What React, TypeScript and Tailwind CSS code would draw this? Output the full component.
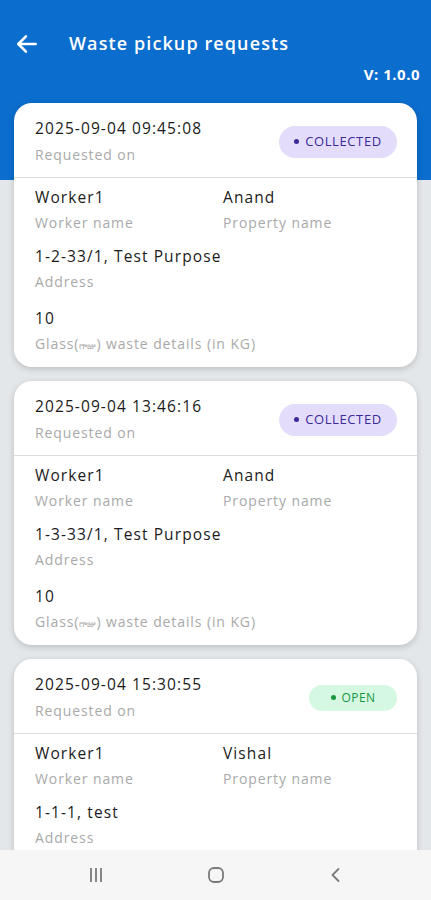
import React from "react";

type Req = {
  date: string;
  status: "COLLECTED" | "OPEN";
  worker: string;
  property: string;
  address: string;
  qty?: string;
};

const data: Req[] = [
  { date: "2025-09-04 09:45:08", status: "COLLECTED", worker: "Worker1", property: "Anand", address: "1-2-33/1, Test Purpose", qty: "10" },
  { date: "2025-09-04 13:46:16", status: "COLLECTED", worker: "Worker1", property: "Anand", address: "1-3-33/1, Test Purpose", qty: "10" },
  { date: "2025-09-04 15:30:55", status: "OPEN", worker: "Worker1", property: "Vishal", address: "1-1-1, test", qty: "10" },
];

function Badge({ status }: { status: Req["status"] }) {
  if (status === "COLLECTED") {
    return (
      <div className="flex h-[32px] w-[118px] items-center justify-center gap-[6px] rounded-full bg-[#e4dcfb] text-[13px] tracking-[0.6px] text-[#3a2a9a]">
        <span className="h-[5px] w-[5px] rounded-full bg-[#3a2a9a]" />
        <span>COLLECTED</span>
      </div>
    );
  }
  return (
    <div className="flex h-[26px] w-[88px] items-center justify-center gap-[6px] rounded-full bg-[#d5f8e3] text-[12px] tracking-[0.4px] text-[#17973f]">
      <span className="h-[5px] w-[5px] rounded-full bg-[#17973f]" />
      <span>OPEN</span>
    </div>
  );
}

function Field({ value, label, gap = "mt-[6px]" }: { value: string; label: React.ReactNode; gap?: string }) {
  return (
    <div className="flex flex-col">
      <span className="text-[15.5px] leading-[20px] font-medium tracking-[1.1px] text-[#1b1b1b]">{value}</span>
      <span className={`${gap} text-[14px] leading-[20px] tracking-[0.9px] text-[#a9a9a9]`}>{label}</span>
    </div>
  );
}

function Card({ r }: { r: Req }) {
  return (
    <div className="overflow-hidden rounded-[18px] bg-white shadow-[0_2px_6px_rgba(0,0,0,0.18)]">
      <div className="flex items-center justify-between border-b border-[#dcdcdc] pl-[21px] pr-[20px] pt-[15px] pb-[12px]">
        <Field value={r.date} label="Requested on" gap="mt-[7px]" />
        <Badge status={r.status} />
      </div>
      <div className="px-[21px] pt-[9px] pb-[11px]">
        <div className="grid grid-cols-[188px_1fr]">
          <Field value={r.worker} label="Worker name" />
          <Field value={r.property} label="Property name" />
        </div>
        <div className="mt-[13px]">
          <Field value={r.address} label="Address" />
        </div>
        <div className="mt-[16px]">
          <Field
            value={r.qty ?? ""}
            label={
              <span>
                Glass(<span className="text-[9px] tracking-normal">గాజు</span>) waste details (in KG)
              </span>
            }
          />
        </div>
      </div>
    </div>
  );
}

export default function App() {
  return (
    <div
      className="relative h-[900px] w-[431px] overflow-hidden bg-[#e4e7ea]"
      style={{ fontFamily: "'Open Sans', 'Noto Sans', sans-serif" }}
    >
      <div className="h-[180px] bg-[#0b6dcd] text-white">
        <div className="flex items-center pt-[30px] pl-[14px]">
          <svg width="26" height="26" viewBox="0 0 24 24" fill="none" stroke="white" strokeWidth="2.4" strokeLinecap="round" strokeLinejoin="round">
            <path d="M20 12H4.5" />
            <path d="M11 5l-7 7 7 7" />
          </svg>
          <span className="ml-[29px] text-[18px] font-semibold tracking-[1.1px]">Waste pickup requests</span>
        </div>
        <div className="flex justify-end pr-[11px] pt-[6px] text-[15px] font-bold tracking-[0.5px]">V: 1.0.0</div>
      </div>
      <div className="-mt-[77px] flex flex-col gap-[14px] px-[14px]">
        {data.map((r, i) => (
          <Card key={i} r={r} />
        ))}
      </div>
      <div className="absolute bottom-0 left-0 flex h-[50px] w-full items-center justify-center gap-[100px] bg-[#f6f6f6]">
        <svg width="20" height="20" viewBox="0 0 20 20" fill="none" stroke="#7a7a7a" strokeWidth="1.8">
          <path d="M5 3v14M10 3v14M15 3v14" />
        </svg>
        <svg width="20" height="20" viewBox="0 0 20 20" fill="none" stroke="#7a7a7a" strokeWidth="1.8">
          <rect x="3" y="3" width="14" height="14" rx="5" />
        </svg>
        <svg width="20" height="20" viewBox="0 0 20 20" fill="none" stroke="#7a7a7a" strokeWidth="1.8" strokeLinecap="round" strokeLinejoin="round">
          <path d="M12.5 4l-6 6 6 6" />
        </svg>
      </div>
    </div>
  );
}
